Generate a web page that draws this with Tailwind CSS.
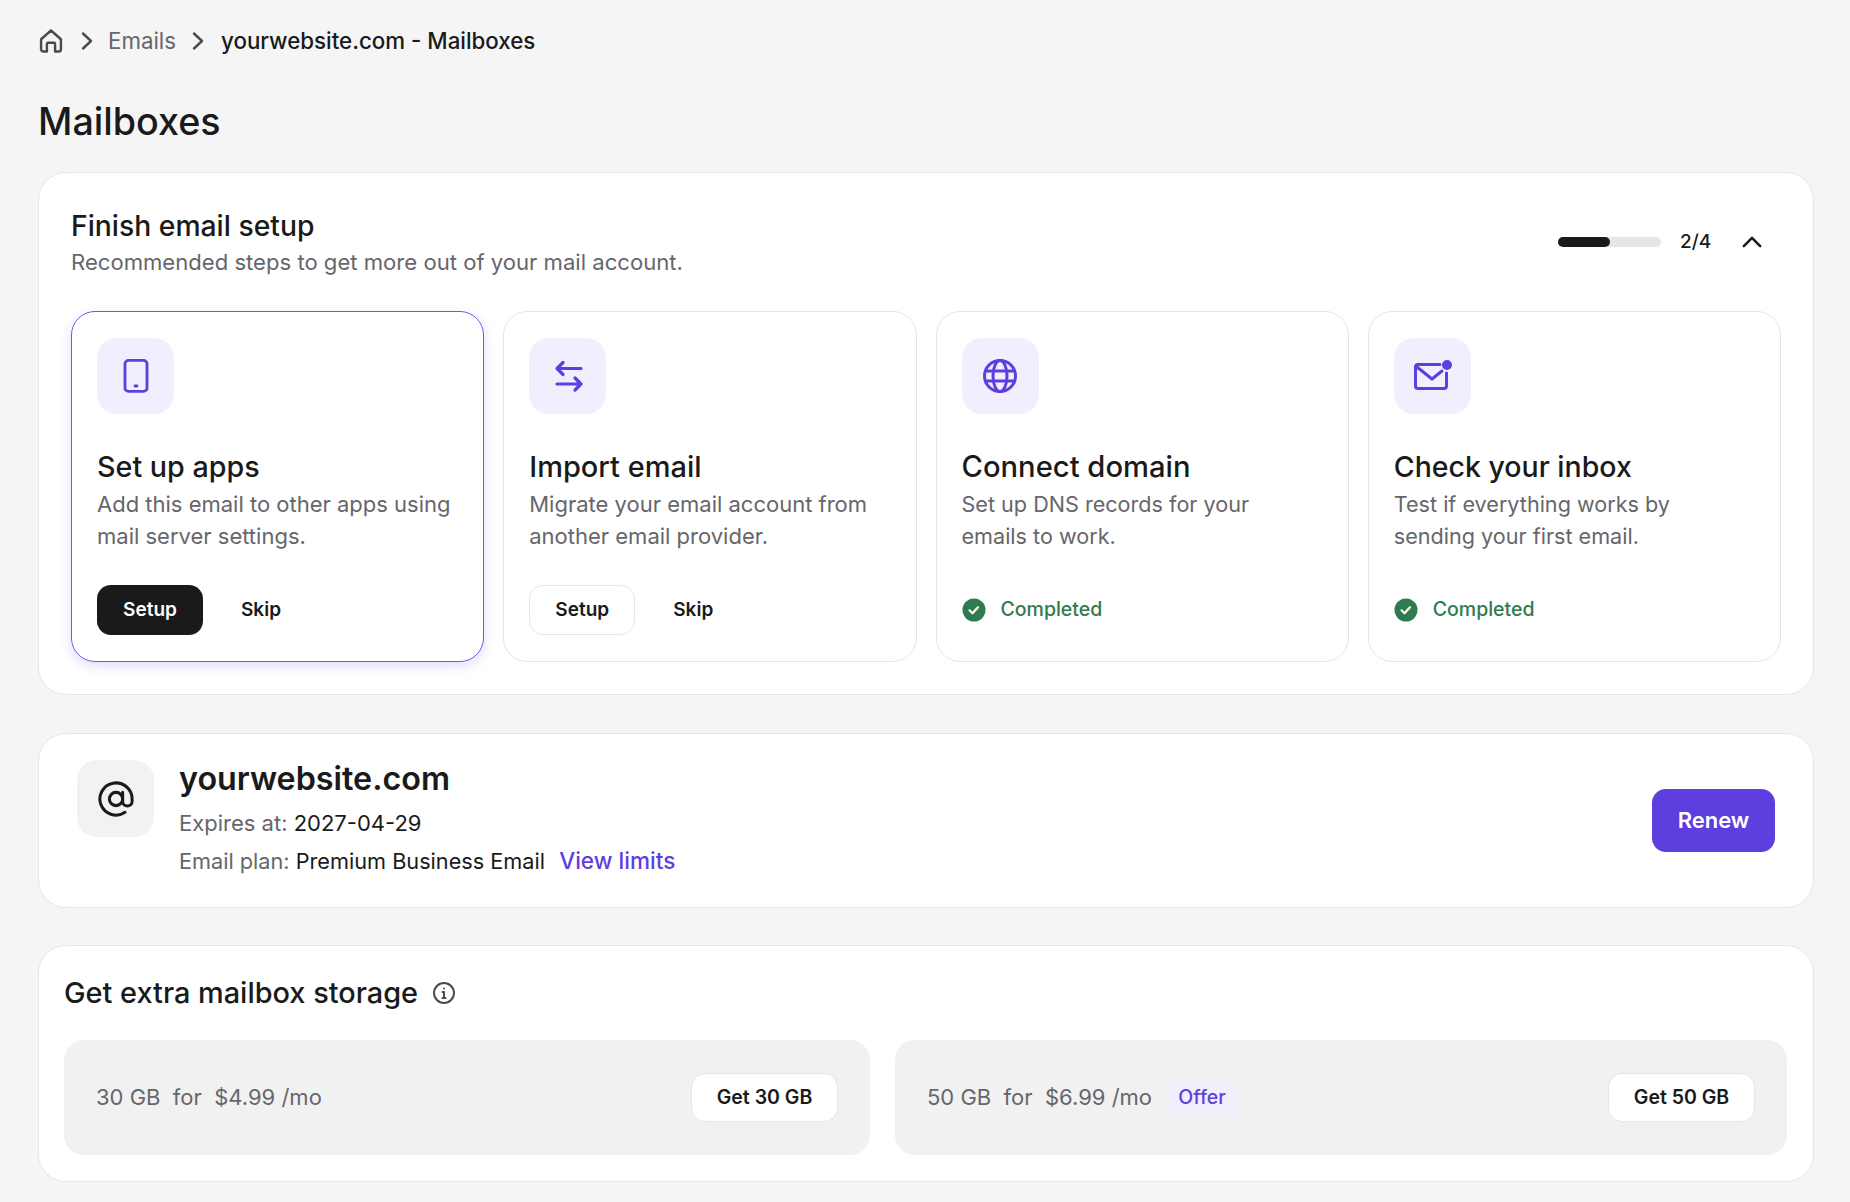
<!DOCTYPE html>
<html lang="en">
  <head>
    <meta charset="UTF-8" />
    <meta name="viewport" content="width=device-width, initial-scale=1.0" />
    <title>Mailboxes</title>
    <script src="https://cdn.jsdelivr.net/npm/@tailwindcss/browser@4"></script>
  </head>
  <body class="bg-[#f5f5f5] font-['Inter',sans-serif] text-[#1a1a1a]">
    <div class="w-[1850px] h-[1202px] overflow-hidden pl-[38px] pr-[36px] pt-[29px]">
      <!-- breadcrumb -->
      <nav class="flex items-center h-[24px] text-[22.300px]">
        <svg class="w-[28px] h-[28px] ml-[-1px]" viewBox="0 0 24 24" fill="none" stroke="#4a4a4f" stroke-width="2.100" stroke-linecap="round" stroke-linejoin="round"><path d="M3.500 10.500 12 3l8.500 7.500V19a2 2 0 0 1-2 2h-3v-6.500a1 1 0 0 0-1-1h-5a1 1 0 0 0-1 1V21h-3a2 2 0 0 1-2-2z"/></svg>
        <svg class="w-[24px] h-[24px] ml-[10px]" viewBox="0 0 24 24" fill="none" stroke="#4a4a4f" stroke-width="2.400" stroke-linecap="round" stroke-linejoin="round"><path d="m8 4.500 8 7.500-8 7.500"/></svg>
        <span class="ml-[9px] text-[#66666b] font-normal">Emails</span>
        <svg class="w-[24px] h-[24px] ml-[10px]" viewBox="0 0 24 24" fill="none" stroke="#4a4a4f" stroke-width="2.400" stroke-linecap="round" stroke-linejoin="round"><path d="m8 4.500 8 7.500-8 7.500"/></svg>
        <span class="ml-[11px] font-medium">yourwebsite.com - Mailboxes</span>
      </nav>

      <h1 class="mt-[46px] h-[44px] leading-[44px] text-[37.700px] font-medium">Mailboxes</h1>

      <!-- setup card -->
      <section class="mt-[29px] h-[523px] bg-white border border-[#e6e6e6] rounded-[28px] pl-[32px] pr-[32px] pt-[36px]">
        <div class="flex justify-between">
          <div>
            <h2 class="h-[34px] leading-[34px] text-[28.300px] font-medium">Finish email setup</h2>
            <p class="mt-[3px] h-[32px] leading-[32px] text-[22.100px] text-[#66666b]">Recommended steps to get more out of your mail account.</p>
          </div>
          <div class="flex items-center h-[24px] mt-[21px] mr-[15px]">
            <div class="w-[103px] h-[10px] rounded-full bg-[#e6e6e6]">
              <div class="w-[52px] h-[10px] rounded-full bg-[#1a1a1a]"></div>
            </div>
            <span class="ml-[19px] w-[30px] text-[19px] font-medium">2/4</span>
            <svg class="w-[28px] h-[28px] ml-[28px]" viewBox="0 0 24 24" fill="none" stroke="#1a1a1a" stroke-width="2.200" stroke-linecap="round" stroke-linejoin="round"><path d="m5 15.500 7-7 7 7"/></svg>
          </div>
        </div>

        <div class="mt-[33px] grid grid-cols-4 gap-[19px]">
          <div class="h-[351px] rounded-[24px] border border-[#7257ea] shadow-[0_4px_12px_rgba(95,62,224,0.18)] pl-[25px] pt-[26px]">
            <div class="w-[77px] h-[76px] rounded-[20px] bg-[#f1eefe] flex items-center justify-center">
              <svg class="w-[40px] h-[40px]" viewBox="0 0 40 40" fill="none" stroke="#5f3ee0" stroke-width="2.800" stroke-linecap="round" stroke-linejoin="round"><rect x="9" y="4.400" width="22" height="31" rx="3.500"/><path d="M19 30h2"/></svg>
            </div>
            <h3 class="mt-[35px] h-[36px] leading-[36px] text-[28.700px] font-medium">Set up apps</h3>
            <p class="mt-[3px] leading-[32px] text-[22px] text-[#66666b]">Add this email to other apps using<br />mail server settings.</p>
            <div class="mt-[33px] flex items-center">
              <button class="w-[106px] h-[50px] rounded-[14px] bg-[#1a1a1a] text-white text-[19px] font-semibold">Setup</button>
              <button class="ml-[38px] text-[19px] font-semibold">Skip</button>
            </div>
          </div>

          <div class="h-[351px] rounded-[24px] border border-[#e6e6e6] pl-[25px] pt-[26px]">
            <div class="w-[77px] h-[76px] rounded-[20px] bg-[#f1eefe] flex items-center justify-center">
              <svg class="w-[40px] h-[40px]" viewBox="0 0 40 40" fill="none" stroke="#5f3ee0" stroke-width="3.200" stroke-linecap="round" stroke-linejoin="round"><path d="M33 12.500H9.500M15 6.500l-6 6 6 6"/><path d="M9 28h24M27 22l6 6-6 6"/></svg>
            </div>
            <h3 class="mt-[35px] h-[36px] leading-[36px] text-[29px] font-medium">Import email</h3>
            <p class="mt-[3px] leading-[32px] text-[22px] text-[#66666b]">Migrate your email account from<br />another email provider.</p>
            <div class="mt-[33px] flex items-center">
              <button class="w-[106px] h-[50px] rounded-[14px] border border-[#e6e6e6] text-[19px] font-semibold">Setup</button>
              <button class="ml-[38px] text-[19px] font-semibold">Skip</button>
            </div>
          </div>

          <div class="h-[351px] rounded-[24px] border border-[#e6e6e6] pl-[25px] pt-[26px]">
            <div class="w-[77px] h-[76px] rounded-[20px] bg-[#f1eefe] flex items-center justify-center">
              <svg class="w-[40px] h-[40px]" viewBox="0 0 40 40" fill="none" stroke="#5f3ee0" stroke-width="3" stroke-linecap="round" stroke-linejoin="round"><circle cx="20" cy="20" r="15.500"/><ellipse cx="20" cy="20" rx="7" ry="15.500"/><path d="M5.500 15h29M5.500 25h29"/></svg>
            </div>
            <h3 class="mt-[35px] h-[36px] leading-[36px] text-[29.200px] font-medium">Connect domain</h3>
            <p class="mt-[3px] leading-[32px] text-[21.600px] text-[#66666b]">Set up DNS records for your<br />emails to work.</p>
            <div class="mt-[33px] h-[50px] flex items-center">
              <svg class="w-[24px] h-[24px]" viewBox="0 0 24 24"><circle cx="12" cy="12" r="11.500" fill="#2f7a4f"/><path d="m7.500 12.300 3 3 5.500-6" fill="none" stroke="#fff" stroke-width="2.200" stroke-linecap="round" stroke-linejoin="round"/></svg>
              <span class="ml-[15px] text-[19.500px] font-medium text-[#2f7a4f]">Completed</span>
            </div>
          </div>

          <div class="h-[351px] rounded-[24px] border border-[#e6e6e6] pl-[25px] pt-[26px]">
            <div class="w-[77px] h-[76px] rounded-[20px] bg-[#f1eefe] flex items-center justify-center">
              <svg class="w-[40px] h-[40px]" viewBox="0 0 40 40" fill="none" stroke="#5f3ee0" stroke-width="3" stroke-linecap="round" stroke-linejoin="round"><path d="M28 8.500H6a2.500 2.500 0 0 0-2.500 2.500v19A2.500 2.500 0 0 0 6 32.500h26a2.500 2.500 0 0 0 2.500-2.500V17"/><path d="m5 11 15 12 10-8"/><circle cx="35" cy="9" r="5" fill="#5f3ee0" stroke="none"/></svg>
            </div>
            <h3 class="mt-[35px] h-[36px] leading-[36px] text-[28.500px] font-medium">Check your inbox</h3>
            <p class="mt-[3px] leading-[32px] text-[21.600px] text-[#66666b]">Test if everything works by<br />sending your first email.</p>
            <div class="mt-[33px] h-[50px] flex items-center">
              <svg class="w-[24px] h-[24px]" viewBox="0 0 24 24"><circle cx="12" cy="12" r="11.500" fill="#2f7a4f"/><path d="m7.500 12.300 3 3 5.500-6" fill="none" stroke="#fff" stroke-width="2.200" stroke-linecap="round" stroke-linejoin="round"/></svg>
              <span class="ml-[15px] text-[19.500px] font-medium text-[#2f7a4f]">Completed</span>
            </div>
          </div>
        </div>
      </section>

      <!-- domain card -->
      <section class="mt-[38px] h-[175px] bg-white border border-[#e6e6e6] rounded-[28px] pl-[38px] pr-[38px] flex">
        <div class="mt-[26px] w-[77px] h-[77px] rounded-[20px] bg-[#f2f2f2] flex items-center justify-center">
          <svg class="w-[36px] h-[36px]" viewBox="0 0 38 38" fill="none" stroke="#1a1a1a" stroke-width="3.200" stroke-linecap="round" stroke-linejoin="round"><circle cx="19" cy="19" r="7"/><path d="M26 12v9.500a5 5 0 0 0 10 0V19a17 17 0 1 0-7.500 14.100"/></svg>
        </div>
        <div class="ml-[25px] pt-[26px]">
          <h2 class="h-[38px] leading-[38px] text-[32.300px] font-semibold">yourwebsite.com</h2>
          <p class="mt-[7px] h-[36px] leading-[36px] text-[22px] text-[#66666b]">Expires at: <span class="text-[#1a1a1a]">2027-04-29</span></p>
          <p class="mt-[2px] h-[36px] leading-[36px] text-[21.700px] text-[#66666b]">Email plan: <span class="text-[#1a1a1a]">Premium Business Email</span> <span class="ml-[8px] text-[22.600px] text-[#5f3ee0] font-medium">View limits</span></p>
        </div>
        <button class="ml-auto self-center w-[123px] h-[63px] rounded-[14px] bg-[#5f3ee0] text-white text-[22px] font-semibold">Renew</button>
      </section>

      <!-- storage card -->
      <section class="mt-[37px] h-[237px] bg-white border border-[#e6e6e6] rounded-[28px] px-[25px] pt-[28px]">
        <div class="flex items-center h-[38px]">
          <h2 class="text-[28.900px] font-medium">Get extra mailbox storage</h2>
          <svg class="w-[24px] h-[24px] ml-[14px]" viewBox="0 0 24 24" fill="none" stroke="#4a4a4f" stroke-width="2" stroke-linecap="round" stroke-linejoin="round"><circle cx="12" cy="12" r="10"/><path d="M10.500 11H12v6M10.500 17h3"/><path d="M12 7.500v.01"/></svg>
        </div>
        <div class="mt-[28px] flex gap-[25px]">
          <div class="w-[806px] h-[115px] rounded-[20px] bg-[#f1f1f1] pl-[32px] pr-[32px] flex items-center justify-between">
            <span class="text-[22px] text-[#66666b] whitespace-pre">30 GB  for  $4.99 /mo</span>
            <button class="w-[147px] h-[49px] rounded-[14px] bg-white border border-[#e6e6e6] text-[19.500px] font-semibold">Get 30 GB</button>
          </div>
          <div class="w-[892px] h-[115px] rounded-[20px] bg-[#f1f1f1] pl-[32px] pr-[32px] flex items-center">
            <span class="text-[22px] text-[#66666b] whitespace-pre">50 GB  for  $6.99 /mo</span>
            <span class="ml-[14px] w-[72px] h-[32px] rounded-[10px] bg-[#f1eefe] text-[19.500px] font-medium text-[#5f3ee0] flex items-center justify-center">Offer</span>
            <button class="ml-auto w-[147px] h-[49px] rounded-[14px] bg-white border border-[#e6e6e6] text-[19.500px] font-semibold">Get 50 GB</button>
          </div>
        </div>
      </section>
    </div>
  </body>
</html>
